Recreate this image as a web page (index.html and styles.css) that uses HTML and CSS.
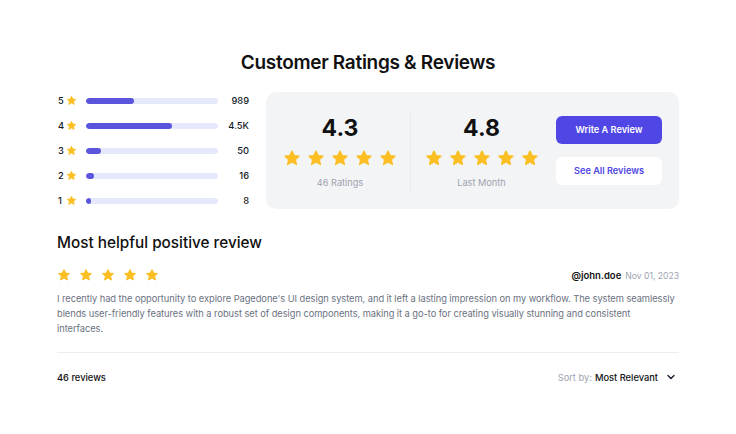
FILE: index.html
```html
<!DOCTYPE html>
<html lang="en">
<head>
  <meta charset="UTF-8" />
  <meta name="viewport" content="width=device-width, initial-scale=1.0"/>
  <title>Customer Ratings &amp; Reviews</title>
  <link rel="stylesheet" href="styles.css">
</head>
<body>

  <svg width="0" height="0" style="position:absolute">
    <symbol id="star" viewBox="0 0 24 24">
      <path d="M12 2.6l2.9 6.1 6.6.8-4.9 4.6 1.3 6.6L12 17.4l-5.9 3.3 1.3-6.6-4.9-4.6 6.6-.8z" fill="currentColor" stroke="currentColor" stroke-width="1.6" stroke-linejoin="round"/>
    </symbol>
  </svg>

  <div class="wrap">
    <h1>Customer Ratings &amp; Reviews</h1>

    <div class="summary">
      <!-- Rating bars -->
      <div class="bars">
        <div class="bar-row">
          <span class="num">5</span>
          <svg class="star-sm"><use href="#star"/></svg>
          <div class="track"><div class="fill" style="width:36%"></div></div>
          <span class="count">989</span>
        </div>
        <div class="bar-row">
          <span class="num">4</span>
          <svg class="star-sm"><use href="#star"/></svg>
          <div class="track"><div class="fill" style="width:65%"></div></div>
          <span class="count">4.5K</span>
        </div>
        <div class="bar-row">
          <span class="num">3</span>
          <svg class="star-sm"><use href="#star"/></svg>
          <div class="track"><div class="fill" style="width:11%"></div></div>
          <span class="count">50</span>
        </div>
        <div class="bar-row">
          <span class="num">2</span>
          <svg class="star-sm"><use href="#star"/></svg>
          <div class="track"><div class="fill" style="width:6%"></div></div>
          <span class="count">16</span>
        </div>
        <div class="bar-row">
          <span class="num">1</span>
          <svg class="star-sm"><use href="#star"/></svg>
          <div class="track"><div class="fill" style="width:3%"></div></div>
          <span class="count">8</span>
        </div>
      </div>

      <!-- Score card -->
      <div class="card">
        <div class="score">
          <div class="big">4.3</div>
          <div class="stars">
            <svg><use href="#star"/></svg><svg><use href="#star"/></svg><svg><use href="#star"/></svg><svg><use href="#star"/></svg><svg><use href="#star"/></svg>
          </div>
          <div class="label">46 Ratings</div>
        </div>
        <div class="divider"></div>
        <div class="score">
          <div class="big">4.8</div>
          <div class="stars">
            <svg><use href="#star"/></svg><svg><use href="#star"/></svg><svg><use href="#star"/></svg><svg><use href="#star"/></svg><svg><use href="#star"/></svg>
          </div>
          <div class="label">Last Month</div>
        </div>
        <div class="actions">
          <a href="#" class="btn btn-primary">Write A Review</a>
          <a href="#" class="btn btn-light">See All Reviews</a>
        </div>
      </div>
    </div>

    <!-- Review -->
    <h2>Most helpful positive review</h2>
    <div class="review-head">
      <div class="stars stars-review">
        <svg><use href="#star"/></svg><svg><use href="#star"/></svg><svg><use href="#star"/></svg><svg><use href="#star"/></svg><svg><use href="#star"/></svg>
      </div>
      <div class="author">
        <span class="user">@john.doe</span>
        <span class="date">Nov 01, 2023</span>
      </div>
    </div>
    <p class="review-text">I recently had the opportunity to explore Pagedone's UI design system, and it left a lasting impression on my workflow. The system seamlessly blends user-friendly features with a robust set of design components, making it a go-to for creating visually stunning and consistent interfaces.</p>

    <div class="footer-row">
      <span class="total">46 reviews</span>
      <div class="sort">
        <span class="sort-label">Sort by:</span>
        <span class="sort-value">Most Relevant</span>
        <svg class="chev" viewBox="0 0 12 12"><path d="M3 4.5l3 3 3-3" fill="none" stroke="#111827" stroke-width="1.3" stroke-linecap="round" stroke-linejoin="round"/></svg>
      </div>
    </div>
  </div>

</body>
</html>
```

FILE: styles.css
```css
body {
  margin: 0;
  font-family: Inter, 'Noto Sans', sans-serif;
  background-color: #fff;
  color: #111827;
}

.wrap {
  width: 622px;
  margin: 0 auto;
  padding-top: 49px;
}

h1 {
  margin: 0;
  text-align: center;
  font-size: 19px;
  line-height: 28px;
  font-weight: 600;
  letter-spacing: -0.3px;
  color: #111;
}

/* Top summary */
.summary {
  display: flex;
  gap: 17px;
  margin-top: 15px;
}

.bars {
  width: 192px;
  display: flex;
  flex-direction: column;
  justify-content: space-between;
  padding: 1px 0;
}

.bar-row {
  display: flex;
  align-items: center;
  height: 15px;
  font-size: 9.3px;
  font-weight: 500;
}

.num {
  width: 8px;
  padding-left: 1px;
}

.star-sm {
  width: 11px;
  height: 11px;
  color: #fbbf24;
  margin-right: 9px;
}

.track {
  width: 132px;
  height: 6px;
  border-radius: 3px;
  background-color: #e6e9fb;
  overflow: hidden;
}

.fill {
  height: 100%;
  border-radius: 3px;
  background-color: #5b55dd;
  min-width: 5px;
}

.count {
  flex: 1;
  text-align: right;
}

.card {
  width: 413px;
  height: 117px;
  box-sizing: border-box;
  display: flex;
  align-items: center;
  padding: 0 17px 0 4px;
  background-color: #f3f4f6;
  border-radius: 10px;
}

.score {
  width: 140px;
  display: flex;
  flex-direction: column;
  align-items: center;
}

.score + .divider + .score {
  width: 141px;
}

.divider {
  width: 1px;
  height: 82px;
  background-color: #eaecef;
}

.big {
  font-size: 23px;
  line-height: 30px;
  font-weight: 700;
  color: #111;
}

.stars {
  display: flex;
  gap: 6px;
}

.stars svg {
  width: 18px;
  height: 18px;
  color: #fbbf24;
}

.score .stars {
  margin-top: 6px;
}

.label {
  margin-top: 9px;
  font-size: 9.2px;
  line-height: 13px;
  color: #9ca3af;
}

.actions {
  margin-left: 4px;
  width: 106px;
  display: flex;
  flex-direction: column;
  gap: 13px;
}

.btn {
  display: block;
  height: 28px;
  line-height: 28px;
  border-radius: 6px;
  text-align: center;
  text-decoration: none;
  font-size: 9.2px;
  font-weight: 600;
}

.btn-primary {
  background-color: #4f46e5;
  color: #fff;
}

.btn-light {
  background-color: #fff;
  color: #4f46e5;
}

/* Review */
h2 {
  margin: 23px 0 0;
  font-size: 15.3px;
  line-height: 22px;
  font-weight: 500;
  color: #111;
}

.review-head {
  display: flex;
  justify-content: space-between;
  align-items: center;
  margin-top: 14px;
}

.stars-review {
  gap: 8px;
}

.stars-review svg {
  width: 14px;
  height: 14px;
}

.author {
  display: flex;
  align-items: baseline;
  gap: 4px;
}

.user {
  font-size: 9.5px;
  font-weight: 600;
  color: #111;
}

.date {
  font-size: 8.6px;
  color: #9ca3af;
}

.review-text {
  margin: 9px 0 0;
  font-size: 9.3px;
  line-height: 15px;
  letter-spacing: -0.05px;
  color: #6b7280;
  padding: 0 3px 16px 0;
  border-bottom: 1px solid #ececee;
}

.footer-row {
  display: flex;
  justify-content: space-between;
  align-items: center;
  margin-top: 18px;
  font-size: 9.3px;
}

.total {
  font-weight: 500;
  color: #111;
}

.sort {
  display: flex;
  align-items: center;
  gap: 3px;
}

.sort-label {
  color: #9ca3af;
}

.sort-value {
  font-weight: 500;
  color: #111;
}

.chev {
  width: 12px;
  height: 12px;
  margin-left: 4px;
  margin-right: 2px;
}
```
